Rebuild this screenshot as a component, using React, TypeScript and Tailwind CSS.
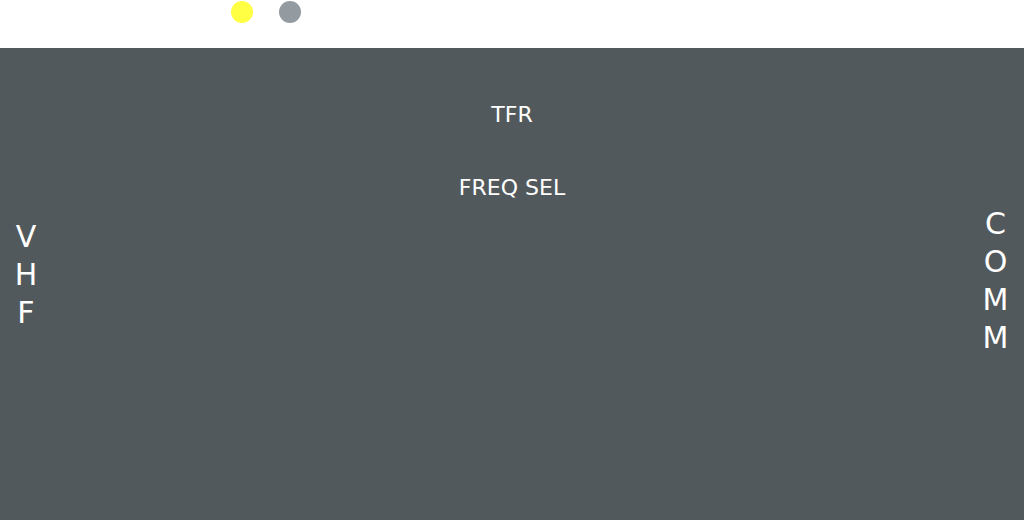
export default function App() {
  const font = { fontFamily: '"DejaVu Sans", Verdana, sans-serif' };
  return (
    <div className="w-[1024px] h-[520px] flex flex-col overflow-hidden" style={font}>
      <div className="h-[48px] bg-white flex items-start pl-[231px] pt-[1px] gap-[26px] shrink-0">
        <div className="w-[22px] h-[22px] rounded-full bg-[#ffff44]" />
        <div className="w-[22px] h-[22px] rounded-full bg-[#939ba1]" />
      </div>
      <div className="flex-1 bg-[#52595c] flex text-white">
        <div className="w-[52px] pt-[170px] flex flex-col items-center text-[30px] leading-[38px]">
          <span>V</span>
          <span>H</span>
          <span>F</span>
        </div>
        <div className="flex-1 flex flex-col items-center pt-[54px] text-[22px] leading-[26px]">
          <div>TFR</div>
          <div className="mt-[47px]">FREQ SEL</div>
        </div>
        <div className="w-[52px] pr-[5px] pt-[157px] flex flex-col items-center text-[30px] leading-[38px]">
          <span>C</span>
          <span>O</span>
          <span>M</span>
          <span>M</span>
        </div>
      </div>
    </div>
  );
}
